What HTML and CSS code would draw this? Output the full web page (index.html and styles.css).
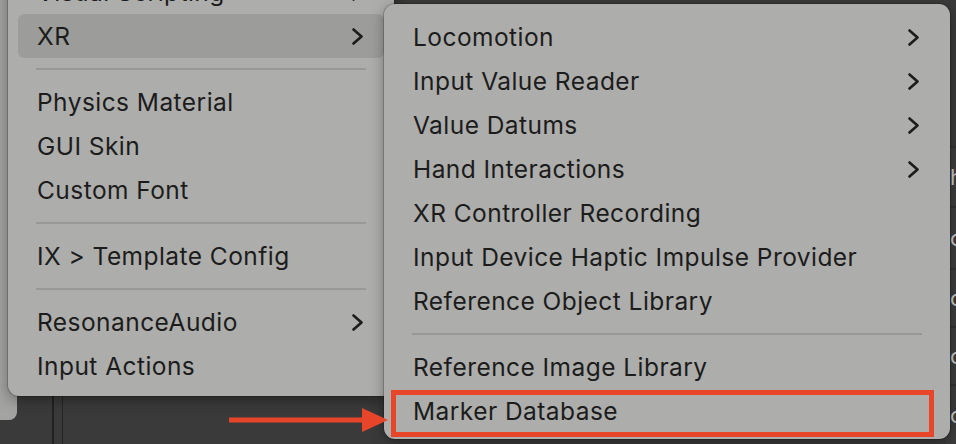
FILE: index.html
```html
<!DOCTYPE html>
<html>
<head>
<meta charset="utf-8">
<link rel="stylesheet" href="styles.css">
</head>
<body>
<div class="desk">
  <div class="back-strip"></div>
  <div class="editor-lines">
    <span class="vline v1"></span>
    <span class="vline v2"></span>
  </div>
  <div class="inspector">
    <div class="irow r1"></div>
    <div class="irow r2"><span>h</span></div>
    <div class="irow r3"><span>c</span></div>
    <div class="irow r4"><span>c</span></div>
    <div class="irow r5"><span>c</span></div>
    <div class="irow r6"><span>c</span></div>
  </div>

  <div class="menu menu-left">
    <div class="item"><span>Visual Scripting</span><svg class="chev" viewBox="0 0 11 17"><polyline points="1.5,1.5 9.5,8.5 1.5,15.5"/></svg></div>
    <div class="item active"><span>XR</span><svg class="chev" viewBox="0 0 11 17"><polyline points="1.5,1.5 9.5,8.5 1.5,15.5"/></svg></div>
    <div class="sep"></div>
    <div class="item"><span>Physics Material</span></div>
    <div class="item"><span>GUI Skin</span></div>
    <div class="item"><span>Custom Font</span></div>
    <div class="sep"></div>
    <div class="item"><span>IX &gt; Template Config</span></div>
    <div class="sep"></div>
    <div class="item"><span>ResonanceAudio</span><svg class="chev" viewBox="0 0 11 17"><polyline points="1.5,1.5 9.5,8.5 1.5,15.5"/></svg></div>
    <div class="item"><span>Input Actions</span></div>
  </div>

  <div class="menu menu-right">
    <div class="item"><span>Locomotion</span><svg class="chev" viewBox="0 0 11 17"><polyline points="1.5,1.5 9.5,8.5 1.5,15.5"/></svg></div>
    <div class="item"><span>Input Value Reader</span><svg class="chev" viewBox="0 0 11 17"><polyline points="1.5,1.5 9.5,8.5 1.5,15.5"/></svg></div>
    <div class="item"><span>Value Datums</span><svg class="chev" viewBox="0 0 11 17"><polyline points="1.5,1.5 9.5,8.5 1.5,15.5"/></svg></div>
    <div class="item"><span>Hand Interactions</span><svg class="chev" viewBox="0 0 11 17"><polyline points="1.5,1.5 9.5,8.5 1.5,15.5"/></svg></div>
    <div class="item"><span>XR Controller Recording</span></div>
    <div class="item"><span>Input Device Haptic Impulse Provider</span></div>
    <div class="item"><span>Reference Object Library</span></div>
    <div class="sep"></div>
    <div class="item"><span>Reference Image Library</span></div>
    <div class="item"><span>Marker Database</span></div>
  </div>

  <div class="callout-box"></div>
  <svg class="callout-arrow" viewBox="0 0 160 26" width="160" height="26">
    <rect x="0" y="10.5" width="136" height="5" fill="#e7452a"/>
    <polygon points="133,1 159,13 133,25" fill="#e7452a"/>
  </svg>
</div>
</body>
</html>
```

FILE: styles.css
```css
* { box-sizing: border-box; }
html, body {
  margin: 0;
  padding: 0;
}
body {
  width: 956px;
  height: 444px;
  overflow: hidden;
  background: #3b3b3b;
  font-family: Inter, "Noto Sans", "Liberation Sans", sans-serif;
}
.desk {
  position: relative;
  width: 956px;
  height: 444px;
  overflow: hidden;
  background: #3a3a3a;
}
.back-strip {
  position: absolute;
  left: -10px;
  top: -10px;
  width: 27px;
  height: 430px;
  background: #a3a3a1;
  border-radius: 0 0 8px 0;
}
.editor-lines {
  position: absolute;
  left: 52px;
  top: 396px;
  height: 48px;
  display: flex;
  gap: 8px;
}
.vline { display: block; height: 100%; background: #222; }
.v1 { width: 2px; }
.v2 { width: 1px; background: #262626; }

.inspector {
  position: absolute;
  left: 946px;
  top: 0;
  width: 10px;
  height: 444px;
  display: flex;
  flex-direction: column;
  background: #3d3d3d;
  overflow: hidden;
}
.irow {
  display: flex;
  align-items: center;
  padding-left: 4px;
  color: #c9c9c9;
  font-size: 22px;
  border-top: 2px solid #333;
  flex: none;
}
.irow span { display: block; }
.r1 { height: 146px; border-top: 0; background: #3a3a3a; }
.r2 { height: 60px; }
.r3 { height: 62px; }
.r4 { height: 58px; }
.r5 { height: 58px; }
.r6 { height: 60px; }

.menu {
  position: absolute;
  background: #adadab;
  border-radius: 11px;
  display: flex;
  flex-direction: column;
  box-shadow: 0 0 0 1px rgba(0,0,0,0.18), 0 4px 14px rgba(0,0,0,0.35);
}
.menu-left {
  left: 8px;
  top: -38px;
  width: 386px;
  padding: 8px 10px;
}
.menu-right {
  left: 384px;
  top: 4px;
  width: 566px;
  height: 435px;
  padding: 11px 10px 6px;
}
.item {
  height: 44px;
  flex: none;
  display: flex;
  align-items: center;
  justify-content: space-between;
  padding: 0 21px 0 19px;
  color: #1c1c1c;
  font-size: 24.5px;
  letter-spacing: 0.45px;
  border-radius: 6px;
}
.item.active { background: #9c9c9a; }
.chev {
  width: 11px;
  height: 17px;
  flex: none;
}
.chev polyline {
  fill: none;
  stroke: #1c1c1c;
  stroke-width: 2.6;
  stroke-linecap: round;
  stroke-linejoin: round;
}
.sep {
  height: 22px;
  flex: none;
  margin: 0 18px;
  display: flex;
  align-items: center;
}
.sep::before {
  content: "";
  display: block;
  width: 100%;
  height: 2px;
  background: #989896;
}
.menu-left .sep:nth-of-type(1) { height: 23px; }

.callout-box {
  position: absolute;
  left: 391px;
  top: 390px;
  width: 543px;
  height: 47px;
  border: 5px solid #e8462b;
}
.callout-arrow {
  position: absolute;
  left: 229px;
  top: 407px;
}
```
